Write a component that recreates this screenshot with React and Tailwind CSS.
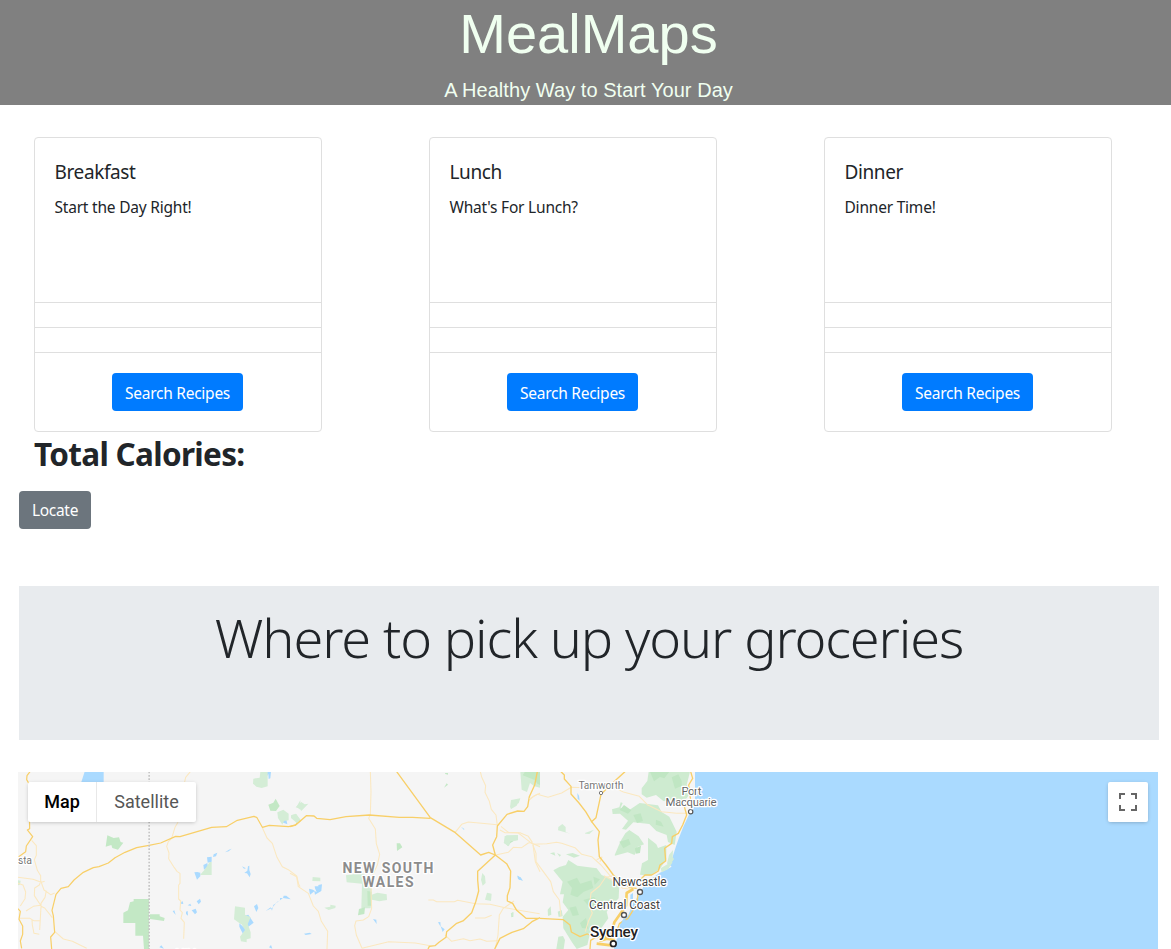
const meals = [
  { title: 'Breakfast', text: 'Start the Day Right!' },
  { title: 'Lunch', text: "What's For Lunch?" },
  { title: 'Dinner', text: 'Dinner Time!' },
];

function MealCard({ title, text }) {
  return (
    <div className="flex h-[295px] w-72 flex-col rounded border border-[#dfdfdf] bg-white">
      <div className="h-[164px] px-[19.5px] pt-[22px]">
        <h5 className="mb-[11px] text-[19px] leading-6 tracking-[-0.38px]">{title}</h5>
        <p className="text-[15.5px] leading-6 tracking-[-0.21px]">{text}</p>
      </div>
      <div className="h-[25px] border-t border-[#dfdfdf]" />
      <div className="h-[26px] border-y border-[#dfdfdf]" />
      <div className="flex grow justify-center pt-[20px] pr-px">
        <button className="h-[38px] w-[131px] rounded bg-[#007bff] pt-[3px] text-[15.5px] tracking-[-0.25px] whitespace-nowrap text-white">
          Search Recipes
        </button>
      </div>
    </div>
  );
}

const lake = '#aadaff';
const park = '#c3e8c5';
const park2 = '#d4edd6';

function MapDrawing() {
  return (
    <svg className="block h-[177px] w-[1140px]" viewBox="18 772 1140 177">
      <rect x="18" y="772" width="1140" height="177" fill="#f5f5f5" />
      {/* western region */}
      <g transform="translate(0 765) scale(0.33333)" fill="none" strokeLinejoin="round">
        <path fill={lake} d="M254 20h57v31h-67zM592 321l9 2 0 11-10 10-8-22zM610 300l12-6 2 12-12 8zM621 277l14-2 0 15-12 3zM641 268l11-5-4 11-9 2zM675 262l12-8 8-3-9 8zM726 304l12 6-6 1zM744 304l4-2v13l4 12-3 10-8-12-8-1 9-7zM518 439l5-3 4 14zM544 410l4-1 2 8-7-1zM558 440l5-2 1 14-6-5zM563 421l8-5 3 7zM575 436l12-5 4 11-6 6zM590 409l10-8 3 9-7 8zM762 424l9-7 4 12-6 12zM797 438l19-9 15-18 9-5 0-7 9 0 2-7 8 0 13 11-23-4-17 13-12 8-4 17-4-10zM724 454l21-5 16 24-16 12-9-11-11 4zM718 475l22 20-5 24-17-34zM478 547l6-6 8 10zM807 547l6-7 4 11zM846 155l8-5 4 8 4 20-18-7 6-5zM798 20h15l-2 20-5 2-1-15-5 8z" />
        <path fill={park} d="M322 211l19 8 16-2 5 14 8 2-16 21-17-5-3-9-17 5zM805 119l15-6 7-12 12 22-11 15-17-1zM401 402h46v150h-15l-3-40h-23v-38h-36v-31l14-7 6-24 11-3zM450 448h29v6l15 5-2 9-42-6z" />
        <path fill={park2} d="M760 41l19-3 2-17h22v43l-18 5-16-4-10-9zM832 142l18-8 16 12v20l-14 2-5 11-13-20zM876 150l13-2 13 17-12 10zM889 126l12-20v28zM629 291h6v39h-35l15-17zM705 424l30 4v21l17 8-11 25-5-8-14 3-20-14zM723 475l18-5 11 32v18l-12 3v9l-17-3-3-14 15-20zM54 346l8 1-2 12-6 2z" />
        <g stroke="#fbe8c0" strokeWidth="3.2">
          <path d="M571 20l-14 17-4 18M534 172l-9 15-10 33-10 10-5 14 7 20-1 17 17 27 8 11 9 6v30l-4 5 0 42 6 6-2 27 7 8-4 17 10 12-2 49M787 188l14 31 16 16 14 42 16 28 18 9 25 19 6 24 4 8M95 226l14 16 0 29-6 13 9 32 10 16 0 15 10 28 20 14 12-5M54 337l45 6 25 9 10-3M54 355l15 5 8 21-2 20-14 22M122 349l-4 11-14 9-1 23 19 29-22 3-22 14M139 377l-4 20-12 18 0 9 11 5 23 29M60 460h30l11 7 20 0M96 465l1 15 5 25 16 3M123 425l-4 70M165 500l25 22 27 7 43 21" />
        </g>
        <g stroke="#f8cf68" strokeWidth="3.6">
          <path d="M90 20l-9 12-1 12 7 12 2 135-7 4 16 20-19 28-2 17-21 15M54 431l7 8-4 24 11 20 0 25-7 20 4 22M155 552L152 516 164 502 160 452 156 436 168 388 183 370 205 365 222 345 250 322 280 308 297 305 325 294 345 278 375 262 410 248 447 241 482 234 527 214 540 215 635 187 679 185 712 166 762 154 771 158 787 187 808 181 866 185 886 180 902 166" />
        </g>
        <path d="M447.500 20v532" stroke="#c6c6c6" strokeWidth="5" strokeDasharray="5 5" />
      </g>
      {/* central plains */}
      <g transform="translate(290 765) scale(0.33333)" fill="none" strokeLinejoin="round">
        <path fill={park2} d="M17 127l17-16 10 7 11-2-21 22-6-9zM3 151l15-5 12 18-7 12-20-17zM68 336l23 2 0 11-24-1zM103 428l18-3v-6l16 3-1 7-20 6zM168 331L214 324 245 340 245 389 262 383 290 388 291 405 268 409 246 404 242 430 214 430 216 356 170 352zM649 211h35v15l-20 3-8 15-15-10zM577 324l8 10 2 20-9 8-5-18zM591 383l14 3-2 22-18-4zM663 105l28-5-5 15-17 4-5 12-4-5zM691 20h59v48l-17-4-13-10-9 27-16-7z" />
        <path fill={park} d="M320 235l10 0 7 12-16 11zM462 68l8-13 4 4zM207 432l18-5-2 20-19 4zM664 444l6-2 0 13-6 2zM465 24h9v5l-8-2zM705 20h45v40l-8-4-8-11-36-14zM649 233l15-7 7 2-11 7zM232 378l13 2 0 42-12 0z" />
        <path fill={lake} d="M57 371l12 3 11 8-5-12-1-6 11 0 0-4 11-2-2 20-19 11-2-10-13 10zM249 462l10 2 1 13zM444 472l7-1 1 14zM452 484l12 9-6 8zM682 331l15 14-10-1zM42 506l17-3 6 4-18 3zM513 185l10 7-1 3z" />
        <g stroke="#fbe8c0" strokeWidth="3.2">
          <path d="M241 20L243 80 241 148 236 160 256 192 259 236 269 268 262 300 248 330 243 380 245 430 236 455 220 465 198 468 194 482 199 510 216 550M0 325l20 10 5 30 30 20 15 38 15 16 9 30 19 30-2 53M571 20l4 16 12 26-2 20 13 27 6 24 14 17 4 32M495 203L515 178 535 171 622 179M633 184L655 202 690 203 715 214 727 232 715 234 695 248 670 247 655 262 617 270M723 233l27 12M729 240l7 50 14 30M415 405H430L440 410H493L503 406 557 416 600 418 645 428 700 438 749 446M555 459h30l20-8M672 408L640 430 628 450 624 510 616 550M465 510l20 19 35-8 20 6 30-5 20 7 34-2M216 550L296 530 376 534 425 543M718 105l15-13 17-7" />
        </g>
        <g stroke="#f8cf68" strokeWidth="4">
          <path d="M0 185L17 180 49 152 72 153 80 160 120 164 168 155 238 150 328 157 368 157 421 160M320 20L421 158 496 203 572 270 596 262 616 270 650 296 662 318 660 368 652 392 652 408 668 415 680 436 708 460 748 460M742 20L734 60 718 95 713 125 702 139 683 138 651 148 622 183 620 215 608 240 616 270 563 319 563 345 566 378 557 411 545 443 519 468 500 475 470 500 468 517 447 532 435 542 418 544 414 552M750 458l-24 12-26 21-34 11-36 18-16 32" />
        </g>
      </g>
      {/* coast */}
      <g transform="translate(500 765) scale(0.33333)" fill="none" strokeLinejoin="round">
        <path fill={park2} d="M35 108l25-7-10 21-18 11zM14 213l40-3-2 15-20 4-8 15-12-12zM175 186l12-9 10 9 0 15 14 5-37-10zM255 204l27-10-14 13-12-1z" />
        <path fill="#ceebd0" d="M425 70L442 48 446 20H570L560 60 572 80 560 100 530 112 490 108 468 90 440 98 425 88zM336 133L358 127 362 112 368 114 362 128 387 136 419 114 474 121 485 141 508 155 530 200 524 240 504 231 500 210 469 198 448 177 400 172 378 194 366 192 384 167 360 146 338 147zM344 270L362 228 376 205 388 195 400 203 416 214 432 238 412 246 404 270 383 262 345 272zM444 218L469 238 474 249 499 240 499 283 479 313 450 332 420 329 426 295 444 285zM160 316L178 306 198 300 205 285 232 302 290 310 305 330 330 340 358 358 356 400 320 440 325 460 305 488 270 505 262 540 230 552 215 530 190 490 188 455 205 435 188 412 192 388 180 388 188 350zM150 265l13-3 3 10zM171 264l12 6-4 5zM198 268l20-4 22 8-18 6zM143 434l9-10 2 25-10 4zM173 440l12-5 3 18-12 3zM32 446l8-4-2 15zM175 515l14-2 6 12-4 27h-22z" />
        <path fill="#c0e6c3" d="M450 20h58l-15 20-13-4-18 13zM515 37l20-9 10 20 0 15-20 8zM359 135l13-15 22 16-10 10zM400 150l22-5 7 23-18 6zM468 164l15 6 8 15-24-6zM358 230l28-8 6 16-22 12zM405 250l18-8-3 22-13 2zM201 350l30-12 10 18 33-10 6 23-30 12-18 16-21-8 5-20zM208 428l20-4 9 26-19 3zM250 405l32-9 16 18-22 20zM280 335l20 8-16 17zM240 474l18-15 8 32-20-2z" />
        <path fill={lake} d="M585 20h1389v532h-1632l11-38 9-42 23-22 15-38 17-20 18-36 19-15 26-18 35-18-13-11 15-16 11-34 9-26 13-33 19-40 16-33zM232 84l5 8 2 15-6-6zM52 333l10 4 7 11-15-6z" />
        <path fill={park2} d="M507 270l12-15-1 22 4 5-10 15-11-1zM482 310l25-15 11-3-14 21-19 9z" />
        <g stroke="#fbe8c0" strokeWidth="3.2">
          <path d="M88 102L112 88 144 97 185 84 214 67 290 70 330 67 348 70 370 81 418 94 442 119 485 140 530 145 562 145M0 195L15 203 55 204 73 218 99 238 140 236 170 232 185 235 225 248 245 268 275 275 303 300 330 332 345 334M99 240L108 265 108 290 130 320 152 350 160 380 178 405 183 455M345 334L317 336 299 363 273 384 268 424 277 444 266 467 256 500M312 332L345 350 368 370 390 372M290 284L306 276 300 290" />
        </g>
        <g stroke="#f8cf68" strokeWidth="4">
          <path d="M183 20L193 30 193 42 213 64 213 87 237 114 257 140 275 170 298 200 294 225 298 275 318 300 340 330 362 350 390 368 410 370M420 345L435 330 455 330 475 318 480 300 497 288 494 250 515 235 517 215 535 205 548 180 560 150 553 125 572 105 566 60 578 40 572 20M273 172L288 158 303 88 316 75 345 47 375 20M120 460L190 464 210 480 214 501 240 515 262 507 290 518M270 552L272 526 291 515 334 515 351 496 358 476 384 460 410 418 414 388" />
          <path strokeWidth="8" d="M298 528l33-10 12-46 35-50 2-38 20-12M305 519l39 6M290 536l50 6M292 516l50-3" />
        </g>
        <path fill={lake} d="M391 389l8-5 0 18-8 0zM370 462l8 2-5 20-15 3z" />
        <g fill="white" stroke="#555" strokeWidth="4">
          <circle cx="303" cy="84" r="5" stroke="#777" strokeWidth="3" />
          <circle cx="572" cy="140" r="6.5" strokeWidth="3.5" />
          <circle cx="420" cy="381" r="7.5" />
          <circle cx="372" cy="450" r="7.5" />
          <circle cx="340" cy="536" r="8.5" stroke="#222" strokeWidth="5" />
        </g>
      </g>
      <g className="font-[Roboto,sans-serif]" stroke="white" strokeWidth="2.5" strokeLinejoin="round" paintOrder="stroke" fill="#444" fontSize="12" textAnchor="middle">
        <text x="25" y="864" fontSize="10.5" fill="#777" textLength="14">sta</text>
        <g fill="#8c8c8c" fontSize="14" fontWeight="700">
          <text x="388" y="873" textLength="91">NEW SOUTH</text>
          <text x="388" y="887" textLength="51">WALES</text>
        </g>
        <text x="601" y="788.500" fontSize="10.5" fill="#777" textLength="45">Tamworth</text>
        <text x="691.5" y="794.500" fontSize="11.5" fill="#666" textLength="20">Port</text>
        <text x="691" y="806" fontSize="11.5" fill="#666" textLength="51">Macquarie</text>
        <text x="639.5" y="886" textLength="54">Newcastle</text>
        <text x="624.5" y="909" textLength="71">Central Coast</text>
        <text x="614" y="937" fontSize="15.5" fontWeight="500" fill="#222" textLength="48">Sydney</text>
        <text x="193" y="956.500" fontSize="10.5" fill="#777">Mildura</text>
      </g>
    </svg>
  );
}

export default function App() {
  return (
    <div className="h-[949px] overflow-hidden bg-white font-['Noto_Sans',sans-serif] text-[#212529]">
      <header className="h-[105px] bg-[#808080] pl-[6px] text-center font-['Liberation_Sans',sans-serif] text-[#f0fff0]">
        <h1 className="h-[78px] text-[56px] leading-[67px]">MealMaps</h1>
        <p className="text-[20px] leading-6 tracking-[0.05px]">A Healthy Way to Start Your Day</p>
      </header>
      <main>
        <section className="flex gap-[107px] pt-8 pl-[34px]">
          {meals.map((meal) => (
            <MealCard key={meal.title} {...meal} />
          ))}
        </section>
        <h2 className="h-[59px] pt-[2px] pl-[34px] text-[31.5px] leading-[40px] font-bold tracking-[-0.7px]">
          Total Calories:
        </h2>
        <div className="h-[95px] pl-[19px]">
          <button className="h-[38px] w-[72px] rounded bg-[#6c757d] pt-[2px] text-[15.5px] tracking-[-0.3px] text-white">
            Locate
          </button>
        </div>
        <section className="ml-[19px] h-[154px] w-[1140px] bg-[#e8ebee] pt-[18px] text-center">
          <h1 className="text-[54px] leading-[66px] font-light tracking-[-1.1px] whitespace-nowrap">
            Where to pick up your groceries
          </h1>
        </section>
        <section className="relative mt-8 ml-[18px] h-[177px] w-[1140px]">
          <MapDrawing />
          <div className="absolute top-[10px] left-[10px] flex h-10 w-[168px] rounded-xs bg-white font-[Roboto,sans-serif] text-[18px] leading-10 shadow-[0_1px_4px_-1px_rgba(0,0,0,0.3)]">
            <button className="w-[69px] border-r border-[#e8e8e8] font-medium text-black">Map</button>
            <button className="grow text-[#565656]">Satellite</button>
          </div>
          <button className="absolute top-[10px] right-[10px] flex size-10 items-center justify-center rounded-xs bg-white shadow-[0_1px_4px_-1px_rgba(0,0,0,0.3)]">
            <svg className="size-[18px]" viewBox="0 0 18 18" fill="#666">
              <path d="M0 0h6v2H2v4H0zM12 0h6v6h-2V2h-4zM0 12h2v4h4v2H0zM16 12h2v6h-6v-2h4z" />
            </svg>
          </button>
        </section>
      </main>
    </div>
  );
}
